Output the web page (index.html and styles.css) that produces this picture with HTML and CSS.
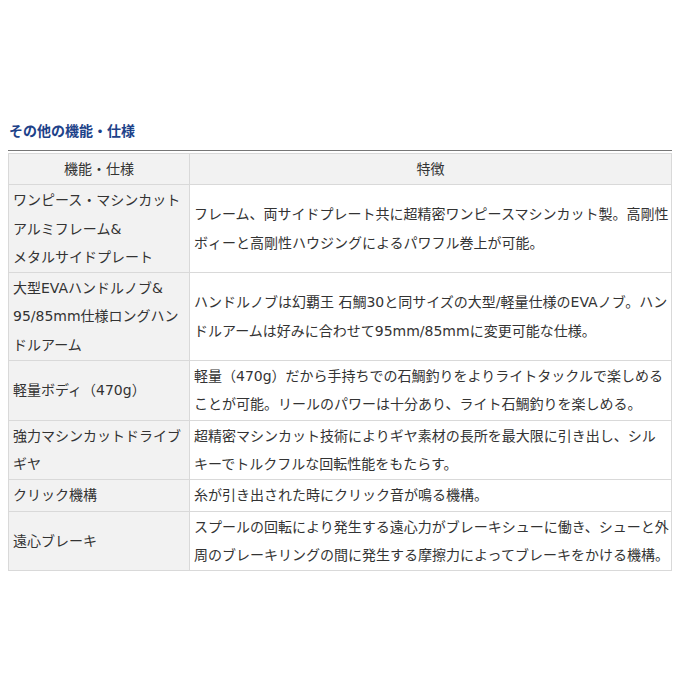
FILE: index.html
```html
<!DOCTYPE html>
<html lang="ja">
<head>
<meta charset="utf-8">
<link rel="stylesheet" href="styles.css">
</head>
<body>
<div class="section">
  <h3 class="section-title">その他の機能・仕様</h3>
  <div class="rule"></div>
  <table class="spec">
    <colgroup><col class="c1"><col class="c2"></colgroup>
    <thead>
      <tr><th>機能・仕様</th><th>特徴</th></tr>
    </thead>
    <tbody>
      <tr>
        <td class="name">ワンピース・マシンカット<br>アルミフレーム&amp;<br>メタルサイドプレート</td>
        <td class="desc">フレーム、両サイドプレート共に超精密ワンピースマシンカット製。高剛性ボィーと高剛性ハウジングによるパワフル巻上が可能。</td>
      </tr>
      <tr>
        <td class="name">大型EVAハンドルノブ&amp;<br>95/85mm仕様ロングハンドルアーム</td>
        <td class="desc">ハンドルノブは幻覇王 石鯛30と同サイズの大型/軽量仕様のEVAノブ。ハンドルアームは好みに合わせて95mm/85mmに変更可能な仕様。</td>
      </tr>
      <tr>
        <td class="name">軽量ボディ（470g）</td>
        <td class="desc">軽量（470g）だから手持ちでの石鯛釣りをよりライトタックルで楽しめることが可能。リールのパワーは十分あり、ライト石鯛釣りを楽しめる。</td>
      </tr>
      <tr>
        <td class="name">強力マシンカットドライブギヤ</td>
        <td class="desc">超精密マシンカット技術によりギヤ素材の長所を最大限に引き出し、シルキーでトルクフルな回転性能をもたらす。</td>
      </tr>
      <tr>
        <td class="name">クリック機構</td>
        <td class="desc">糸が引き出された時にクリック音が鳴る機構。</td>
      </tr>
      <tr>
        <td class="name">遠心ブレーキ</td>
        <td class="desc">スプールの回転により発生する遠心力がブレーキシューに働き、シューと外周のブレーキリングの間に発生する摩擦力によってブレーキをかける機構。</td>
      </tr>
    </tbody>
  </table>
</div>
</body>
</html>
```
FILE: styles.css
```css
html, body {
  margin: 0;
  padding: 0;
  background: #fff;
}
body {
  padding: 8px;
  font-family: "DejaVu Sans", "Noto Sans CJK JP", sans-serif;
  color: #333;
  font-size: 14px;
  line-break: strict;
}
.section {
  padding-top: 113px;
}
.section-title {
  margin: 0 0 0 1px;
  font-size: 14px;
  line-height: 20px;
  font-weight: bold;
  color: #1d4289;
}
.rule {
  margin-top: 9px;
  border-top: 1px solid #777;
  height: 0;
}
.spec {
  margin-top: 2px;
  width: 100%;
  border-collapse: collapse;
  table-layout: fixed;
}
.c1 { width: 181px; }
.spec th,
.spec td {
  border: 1px solid #d9d9d9;
  padding: 1px 4px;
  line-height: 28.3px;
  vertical-align: middle;
  text-align: left;
  font-weight: normal;
}
.spec td.desc {
  padding-right: 0;
}
.spec th {
  background: #f2f2f2;
  text-align: center;
}
.spec td.name {
  background: #f2f2f2;
}
```
